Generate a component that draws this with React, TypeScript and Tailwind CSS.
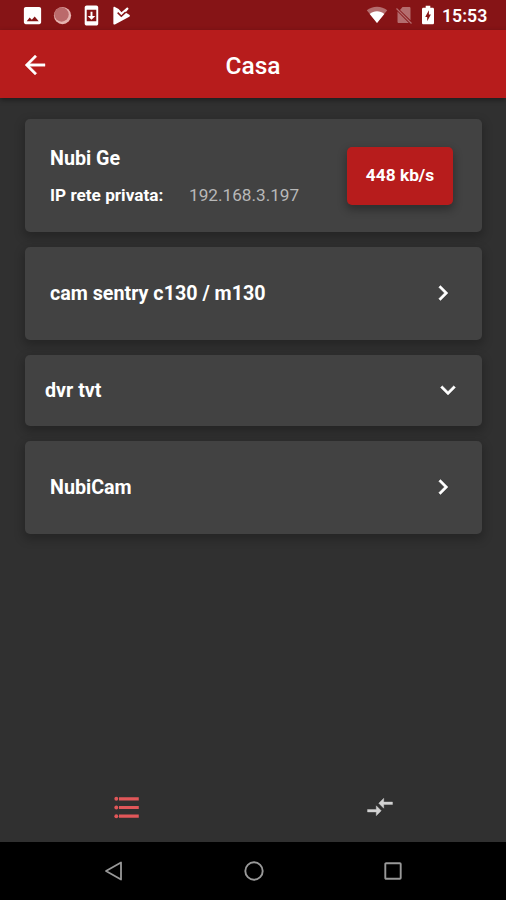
import type { ReactNode } from 'react';
import { clsx } from 'clsx';

interface IconProps {
  className?: string;
  children: ReactNode;
}

function Icon({ className, children }: IconProps) {
  return (
    <svg viewBox="0 0 24 24" fill="currentColor" className={clsx('shrink-0', className)}>
      {children}
    </svg>
  );
}

function StatusBar() {
  return (
    <div className="flex h-[30px] items-center justify-between bg-[#861416] pr-[18px] pl-[21px] text-white">
      <div className="flex items-center">
        <Icon className="size-[23px]">
          <path d="M21 19V5c0-1.100-.9-2-2-2H5c-1.100 0-2 .9-2 2v14c0 1.100.9 2 2 2h14c1.100 0 2-.9 2-2zM9 14l2.300 2.500 3-3.500L18.500 18H6z" />
        </Icon>
        <Icon className="ml-[7px] size-[23px]">
          <circle cx="12" cy="12" r="9" fill="#e6b3b0" />
          <circle cx="11" cy="11" r="7.500" fill="#bb6a6b" />
        </Icon>
        <Icon className="ml-[6px] size-[23px]">
          <path
            fillRule="evenodd"
            d="M17 1.500H7c-1.100 0-2.100.9-2.100 2v17c0 1.100 1 2 2.100 2h10c1.100 0 2-.9 2-2v-17c0-1.100-.9-2-2-2zM17 18H7V6h10v12zM16 12.500h-3V8h-2v4.500H8l4 4z"
          />
        </Icon>
        <Icon className="ml-[7px] size-[23px]">
          <path d="M3.500 4c0-1 .8-1.400 1.600-1L9 5.200l3 3.300L18 3.500l1.500 1.400-3.300 4 3.900 2.300c.9.500.9 1.500 0 2L5.100 21.300c-.8.400-1.600 0-1.600-1z" />
          <path d="M8 9l3.800 3.800 4.600-4.300" fill="none" stroke="#861416" strokeWidth="1.600" />
        </Icon>
      </div>
      <div className="flex items-center">
        <svg viewBox="0 0 22 18" className="h-[18px] w-[22px]" fill="currentColor">
          <path d="M11 17L.8 4.300C3.700 2 7.200.8 11 .8s7.300 1.200 10.200 3.500z" opacity=".38" />
          <path d="M11 17L3.700 7.900C5.800 6.200 8.300 5.300 11 5.300s5.200.9 7.300 2.600z" />
        </svg>
        <svg viewBox="0 0 18 18" className="ml-[7px] size-[18px]" fill="currentColor">
          <path d="M7.500 1h6.700c.8 0 1.300.5 1.300 1.300v12L5 4zM2.500 5.500l11.300 11.500H3.800c-.8 0-1.300-.5-1.300-1.300z" opacity=".38" />
          <path d="M1.500 2.500l15 15" stroke="currentColor" strokeWidth="1.300" opacity=".38" />
        </svg>
        <svg viewBox="0 0 12 20" className="ml-[9px] h-5 w-3" fill="currentColor">
          <path
            fillRule="evenodd"
            d="M10.700 2.700H8.300V.7H3.700v2H1.300C.6 2.700 0 3.300 0 4v14c0 .7.600 1.300 1.300 1.300h9.400c.7 0 1.300-.6 1.300-1.300V4c0-.7-.6-1.300-1.300-1.300zM5.200 16.300v-4.200H3.200l3.700-6.800v4.300h2z"
          />
        </svg>
        <span className="ml-[8px] w-[46px] pt-[2px] text-[17.7px] leading-5 font-semibold whitespace-nowrap">15:53</span>
      </div>
    </div>
  );
}

function AppBar() {
  return (
    <header className="grid h-[68px] grid-cols-[70px_1fr_70px] items-center bg-[#b71c1c] text-white shadow-[0_2px_5px_rgba(0,0,0,0.4)]">
      <button className="flex justify-center pt-px">
        <Icon className="size-[30px]">
          <path d="M20 11H7.830l5.590-5.590L12 4l-8 8 8 8 1.410-1.410L7.830 13H20v-2z" stroke="currentColor" strokeWidth=".3" />
        </Icon>
      </button>
      <h1 className="pt-[3px] text-center text-[24.5px] leading-8 font-medium">Casa</h1>
    </header>
  );
}

function Card({ className, children }: { className?: string; children: ReactNode }) {
  return (
    <div
      className={clsx(
        'flex items-center justify-between rounded-[5px] bg-[#424242] shadow-[0_4px_10px_2px_rgba(0,0,0,0.22)]',
        className
      )}
    >
      {children}
    </div>
  );
}

function DeviceRow({ name, expandable }: { name: string; expandable?: boolean }) {
  return (
    <Card className={expandable ? 'h-[71px] pr-[19px] pl-5' : 'h-[93px] pr-6 pl-[25px]'}>
      <span className="pt-px text-[19.7px] leading-6 font-bold">{name}</span>
      <Icon className="mb-px size-[30px]">
        {expandable ? (
          <path d="M7.410 8.590L12 13.170l4.590-4.580L18 10l-6 6-6-6z" stroke="currentColor" strokeWidth=".3" />
        ) : (
          <path d="M8.590 16.590L13.170 12 8.590 7.410 10 6l6 6-6 6z" stroke="currentColor" strokeWidth=".3" />
        )}
      </Icon>
    </Card>
  );
}

function BottomTabs() {
  return (
    <nav className="grid h-[71px] grid-cols-2 place-items-center pt-px">
      <button className="text-[#e15759]">
        <Icon className="size-[31px]">
          <path d="M6.200 4h15.300v2.500H6.200zM6.200 10.750h15.300v2.500H6.200zM6.200 17.500h15.300V20H6.200z" />
          <circle cx="4.100" cy="5.250" r="1.500" />
          <circle cx="4.100" cy="12" r="1.500" />
          <circle cx="4.100" cy="18.750" r="1.500" />
        </Icon>
      </button>
      <button className="pl-px text-[#d2d2d2]">
        <Icon className="size-[30px]">
          <path d="M9.010 14H2v2h7.010v3L13 15l-3.990-4v3zm5.980-1v-3H22V8h-7.010V5L11 9l3.990 4z" stroke="currentColor" strokeWidth=".3" />
        </Icon>
      </button>
    </nav>
  );
}

function SystemNav() {
  return (
    <div className="flex h-[58px] items-center justify-between bg-black pr-[101px] pl-[102px] text-[#999999]">
      <svg viewBox="0 0 24 24" className="size-6" fill="none" stroke="currentColor" strokeWidth="1.800">
        <path d="M19 3.500v17L4 12z" strokeLinejoin="round" />
      </svg>
      <svg viewBox="0 0 24 24" className="size-6" fill="none" stroke="currentColor" strokeWidth="1.900">
        <circle cx="12" cy="12" r="8.700" />
      </svg>
      <svg viewBox="0 0 24 24" className="size-6" fill="none" stroke="currentColor" strokeWidth="1.900">
        <rect x="4.300" y="4.300" width="15.400" height="15.400" rx=".8" />
      </svg>
    </div>
  );
}

export default function App() {
  return (
    <div className="flex h-[900px] w-[506px] flex-col overflow-hidden bg-[#303030] font-['Roboto',sans-serif] text-white">
      <StatusBar />
      <AppBar />
      <main className="flex flex-1 flex-col gap-[15px] pt-[21px] pr-6 pl-[25px]">
        <Card className="h-[113px] pr-[29px] pl-[25px]">
          <div className="flex flex-col gap-[13px]">
            <span className="pt-px text-[19.7px] leading-6 font-bold">Nubi Ge</span>
            <div className="flex text-[17.2px] leading-[22px]">
              <span className="w-[139px] font-bold">IP rete privata:</span>
              <span className="text-[#b8b8b8]">192.168.3.197</span>
            </div>
          </div>
          <button className="h-[58px] w-[106px] rounded-[5px] bg-[#b71c1c] text-[17.3px] font-bold whitespace-nowrap shadow-[0_4px_9px_1px_rgba(0,0,0,0.3)]">
            448 kb/s
          </button>
        </Card>
        <DeviceRow name="cam sentry c130 / m130" />
        <DeviceRow name="dvr tvt" expandable />
        <DeviceRow name="NubiCam" />
      </main>
      <BottomTabs />
      <SystemNav />
    </div>
  );
}
